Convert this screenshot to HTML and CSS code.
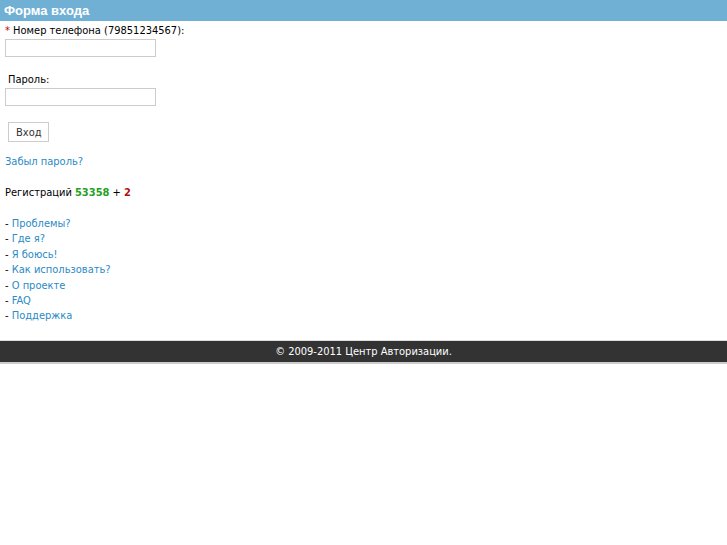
FILE: index.html
```html
<!DOCTYPE html>
<html lang="ru">
<head>
    <meta charset="UTF-8">
    <title>Форма входа</title>
    <link rel="stylesheet" href="styles.css">
</head>
<body>
    <div class="header">Форма входа</div>

    <div class="content">
        <form class="login-form">
            <div class="form-group">
                <label for="phone"><span class="req">*</span> Номер телефона (79851234567):</label>
                <input type="text" id="phone" name="phone">
            </div>
            <div class="form-group">
                <label for="pass" class="indent">Пароль:</label>
                <input type="password" id="pass" name="pass">
            </div>
            <button type="submit">Вход</button>
        </form>

        <p><a href="#">Забыл пароль?</a></p>

        <p class="stats">Регистраций <b class="total">53358</b> + <b class="today">2</b></p>

        <ul class="links">
            <li>- <a href="#">Проблемы?</a></li>
            <li>- <a href="#">Где я?</a></li>
            <li>- <a href="#">Я боюсь!</a></li>
            <li>- <a href="#">Как использовать?</a></li>
            <li>- <a href="#">О проекте</a></li>
            <li>- <a href="#">FAQ</a></li>
            <li>- <a href="#">Поддержка</a></li>
        </ul>
    </div>

    <div class="footer">&copy; 2009-2011 Центр Авторизации.</div>
</body>
</html>
```

FILE: styles.css
```css
body {
    margin: 0;
    font-family: "DejaVu Sans Condensed", "DejaVu Sans", sans-serif;
    font-stretch: condensed;
    font-size: 11px;
    color: #000;
    background: #fff;
}
a {
    color: #2a8ac6;
    text-decoration: none;
}
.header {
    background-color: #70b0d4;
    color: #fff;
    font-family: "Liberation Sans", Arial, sans-serif;
    font-stretch: normal;
    font-weight: bold;
    font-size: 13px;
    height: 21px;
    line-height: 21px;
    padding-left: 4px;
}
.content {
    padding: 2px 5px 16px 5px;
}
.form-group {
    margin-bottom: 15px;
}
.form-group label {
    display: block;
    line-height: 15px;
}
.form-group label.indent {
    padding-left: 3px;
}
.req {
    color: #c00;
}
.form-group input {
    display: block;
    width: 151px;
    height: 18px;
    box-sizing: border-box;
    border: 1px solid #ccc;
    margin: 1px 0 0 0;
    padding: 0 3px;
    font-size: 11px;
}
button {
    margin: 1px 0 0 3px;
    height: 20px;
    padding: 0 6px 0 7px;
    border: 1px solid #ccc;
    background: #fff;
    font-family: "DejaVu Sans Condensed", "DejaVu Sans", sans-serif;
    font-stretch: condensed;
    font-size: 11px;
    color: #333;
}
p {
    margin: 12px 0 0 0;
    line-height: 15px;
}
p.stats {
    margin-top: 16px;
}
.total {
    color: #22a022;
}
.today {
    color: #b01010;
}
.links {
    list-style: none;
    margin: 16px 0 0 0;
    padding: 0;
}
.links li {
    line-height: 15.4px;
}
.footer {
    background-color: #333;
    color: #fff;
    text-align: center;
    height: 21px;
    line-height: 21px;
    border-top: 1px solid #ddd;
    border-bottom: 2px solid #ccc;
}
```
